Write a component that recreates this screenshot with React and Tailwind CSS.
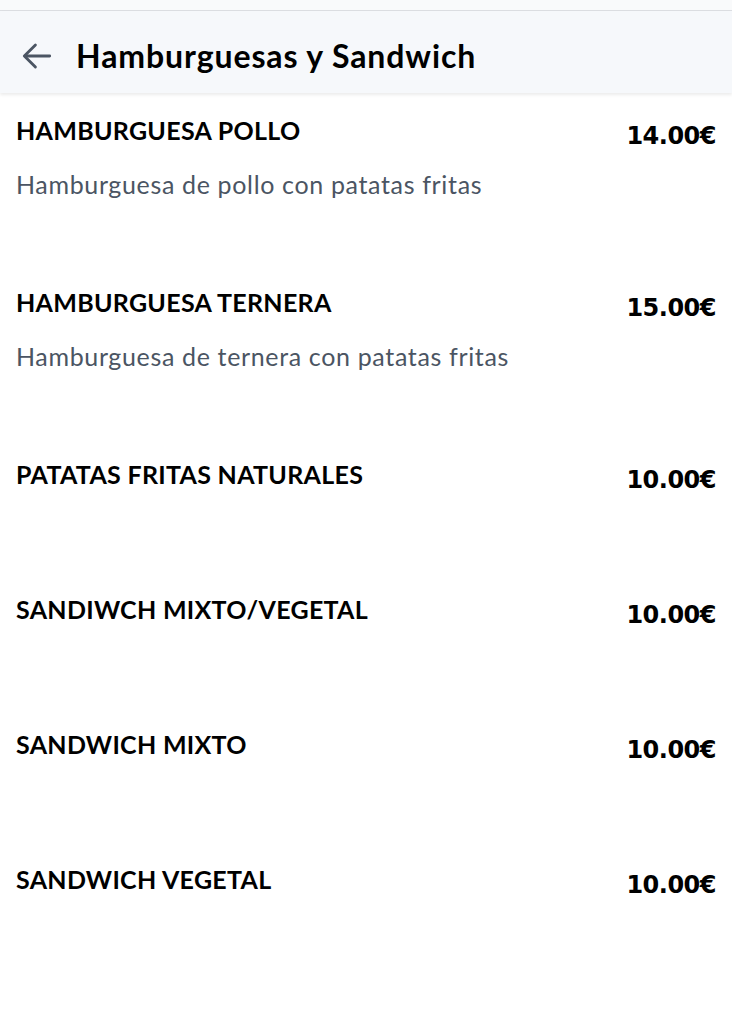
import React from 'react';

const items = [
  { name: 'HAMBURGUESA POLLO', desc: 'Hamburguesa de pollo con patatas fritas', price: '14.00€' },
  { name: 'HAMBURGUESA TERNERA', desc: 'Hamburguesa de ternera con patatas fritas', price: '15.00€' },
  { name: 'PATATAS FRITAS NATURALES', price: '10.00€' },
  { name: 'SANDIWCH MIXTO/VEGETAL', price: '10.00€' },
  { name: 'SANDWICH MIXTO', price: '10.00€' },
  { name: 'SANDWICH VEGETAL', price: '10.00€' },
];

const BackArrow = () => (
  <svg width="38" height="38" viewBox="0 0 24 24" fill="none" stroke="#4b5563" strokeWidth="1.8" strokeLinecap="round" strokeLinejoin="round">
    <path d="M20 12H4.5" />
    <path d="M11 19l-7-7 7-7" />
  </svg>
);

const MenuItem = ({ item }) => (
  <div className="flex justify-between min-h-[135px] px-4 pt-[21px] pb-[65px]">
    <div className="flex flex-col">
      <h3 className="text-[25px] leading-[32px] font-bold text-black tracking-[0.3px]">{item.name}</h3>
      {item.desc && (
        <p className="mt-[22px] text-[25px] leading-[32px] text-[#4b5563] tracking-[0.65px]">{item.desc}</p>
      )}
    </div>
    <span className="mt-[6px] text-[24px] leading-[32px] font-bold text-black font-['DejaVu_Sans',sans-serif] tracking-[-0.5px]">
      {item.price}
    </span>
  </div>
);

export default function App() {
  return (
    <div className="min-h-screen bg-white font-['Lato',sans-serif]">
      <div className="h-[11px] bg-[#f9fafb] border-b border-[#dcdee2]" />
      <header className="h-[82px] flex items-center gap-[20px] pl-[18px] pt-[8px] bg-[#f6f8fb] shadow-[0_2px_3px_rgba(0,0,0,0.08)] relative">
        <BackArrow />
        <h1 className="text-[32px] font-bold text-black tracking-[0.9px]">Hamburguesas y Sandwich</h1>
      </header>
      <main>
        {items.map((item) => (
          <MenuItem key={item.name} item={item} />
        ))}
      </main>
    </div>
  );
}
